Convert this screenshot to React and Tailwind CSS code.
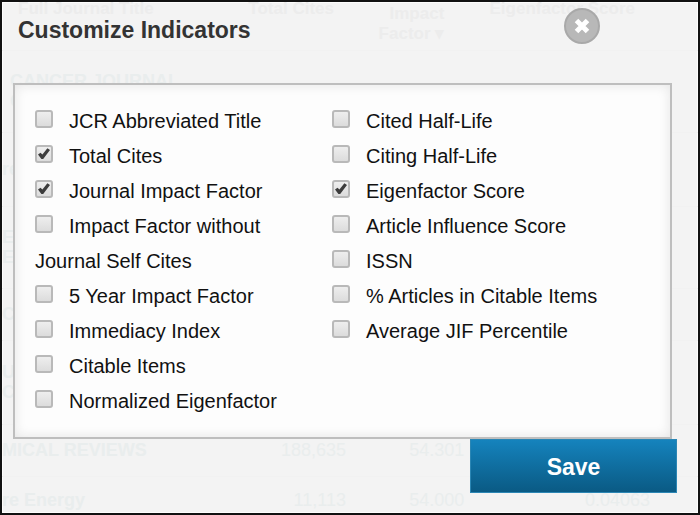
import { useState } from 'react';

const LEFT_COLUMN = [
  'JCR Abbreviated Title',
  'Total Cites',
  'Journal Impact Factor',
  'Impact Factor without Journal Self Cites',
  '5 Year Impact Factor',
  'Immediacy Index',
  'Citable Items',
  'Normalized Eigenfactor',
];

const RIGHT_COLUMN = [
  'Cited Half-Life',
  'Citing Half-Life',
  'Eigenfactor Score',
  'Article Influence Score',
  'ISSN',
  '% Articles in Citable Items',
  'Average JIF Percentile',
];

function Indicator({ label, checked, onChange }) {
  return (
    <label className="block">
      <span className="relative inline-block size-[18px] mr-4 align-baseline">
        <input
          type="checkbox"
          checked={checked}
          onChange={onChange}
          className="block size-[18px] appearance-none rounded-[3px] border-2 border-[#b9b9b9] bg-linear-to-b from-[#eeeeee] to-[#dcdcdc]"
        />
        {checked && (
          <svg viewBox="0 0 18 18" className="absolute inset-0 size-[18px] pointer-events-none" aria-hidden="true">
            <path d="M3 9.5 L5.5 7.8 L7.4 9.6 L12.4 3.2 L15 5 L8.2 14 L6.4 14 Z" fill="#3c3c3c" />
          </svg>
        )}
      </span>
      {label}
    </label>
  );
}

// Faded journal list that shows through behind the dialog
function JournalTable() {
  return (
    <table className="absolute inset-x-0 top-0 w-full table-fixed text-lg leading-5 font-bold text-[#e9eded]" aria-hidden="true">
      <colgroup>
        <col className="w-[28%]" />
        <col className="w-[22%]" />
        <col className="w-[17%]" />
        <col />
      </colgroup>
      <thead>
        <tr className="h-12 align-top text-[17px] text-[#ececec]">
          <th className="pl-4 text-left whitespace-nowrap leading-[14px]">Full Journal Title</th>
          <th className="pr-4 text-right leading-[14px]">Total Cites</th>
          <th className="pt-[2px] pr-6 text-right">Impact Factor ▾</th>
          <th className="pr-[63px] text-right leading-[14px]">Eigenfactor Score</th>
        </tr>
      </thead>
      <tbody>
        <tr className="h-[82px] border-t border-[#f1f1f1]">
          <td className="pl-2 whitespace-nowrap" colSpan={4}>CANCER JOURNAL<br />C</td>
        </tr>
        <tr className="h-[74px] border-t border-[#f1f1f1]">
          <td colSpan={4}>re</td>
        </tr>
        <tr className="h-[82px] border-t border-[#f1f1f1]">
          <td colSpan={4}>E<br />E</td>
        </tr>
        <tr className="h-[52px] border-t border-[#f1f1f1]">
          <td colSpan={4}>C</td>
        </tr>
        <tr className="h-[84px] border-t border-[#f1f1f1]">
          <td colSpan={4}>U<br />C</td>
        </tr>
        <tr className="h-[52px] border-t border-[#f1f1f1]">
          <td className="whitespace-nowrap">MICAL REVIEWS</td>
          <td className="pr-1 text-right font-normal">188,635</td>
          <td className="pr-1 text-right font-normal">54.301</td>
          <td></td>
        </tr>
        <tr className="h-[34px] border-t border-[#f1f1f1] align-bottom">
          <td className="whitespace-nowrap">re Energy</td>
          <td className="pr-1 text-right font-normal">11,113</td>
          <td className="pr-1 text-right font-normal">54.000</td>
          <td className="pr-12 text-right font-normal">0.04063</td>
        </tr>
      </tbody>
    </table>
  );
}

export default function App() {
  const [selected, setSelected] = useState(['Total Cites', 'Journal Impact Factor', 'Eigenfactor Score']);

  const toggle = (label) =>
    setSelected((prev) => (prev.includes(label) ? prev.filter((l) => l !== label) : [...prev, label]));

  const renderColumn = (labels) =>
    labels.map((label) => (
      <Indicator key={label} label={label} checked={selected.includes(label)} onChange={() => toggle(label)} />
    ));

  return (
    <div className="relative min-h-screen border-2 border-[#111111] bg-[#f3f3f3] font-['Liberation_Sans',Arial,sans-serif] shadow-[inset_0_0_0_1px_#fdfdfd]">
      <JournalTable />
      <form className="relative" onSubmit={(e) => e.preventDefault()}>
        <header className="flex h-[81px] items-start justify-between pl-4 pr-[98px] pt-1">
          <h1 className="pt-3 text-[23px] leading-6 font-bold text-[#333333]">Customize Indicators</h1>
          <button
            type="button"
            aria-label="Close"
            className="mt-[2px] flex size-9 items-center justify-center rounded-full border-2 border-[#a9a9a9] bg-[#b8b8b8]"
          >
            <svg viewBox="0 0 16 16" className="size-4" aria-hidden="true">
              <path d="M2.5 2.5 L13.5 13.5 M13.5 2.5 L2.5 13.5" stroke="#ffffff" strokeWidth="5" />
            </svg>
          </button>
        </header>

        <div className="ml-[11px] mr-[26px] flex gap-12 border-2 border-[#bebebe] bg-[#fdfdfd] px-5 pt-[19px] pb-[18px] text-xl leading-[35px] text-[#111111] shadow-[inset_0_0_12px_#e4e4e4]">
          <div className="w-[249px]">{renderColumn(LEFT_COLUMN)}</div>
          <div className="flex-1">{renderColumn(RIGHT_COLUMN)}</div>
        </div>

        <div className="flex justify-end pr-[21px]">
          <button
            type="submit"
            className="h-[54px] w-[207px] border border-[#2b86b4] bg-linear-to-b from-[#1583bd] to-[#0a5a84] pt-[2px] text-[23px] font-bold text-white"
          >
            Save
          </button>
        </div>
      </form>
    </div>
  );
}
